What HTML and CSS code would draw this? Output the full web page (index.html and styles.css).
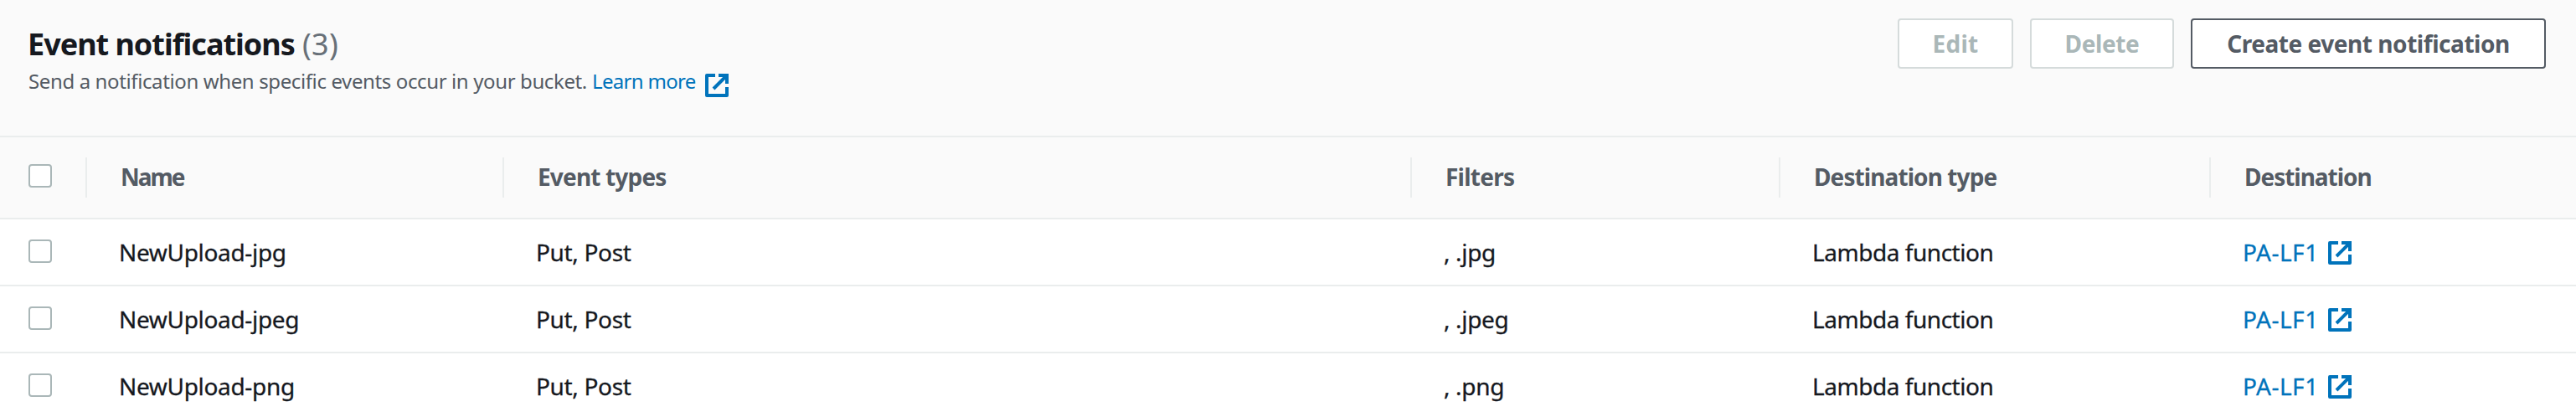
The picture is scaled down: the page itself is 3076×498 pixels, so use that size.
FILE: index.html
```html
<!DOCTYPE html>
<html lang="en">
<head>
<meta charset="utf-8">
<title>Event notifications</title>
<link rel="stylesheet" href="styles.css">
</head>
<body>
<svg class="sprite" aria-hidden="true">
  <symbol id="external" viewBox="0 0 16 16">
    <path d="M14 9v5H2V2h5" stroke-linejoin="round"/>
    <path d="M9 2h5v5M6 10l8-8"/>
  </symbol>
</svg>
<section class="panel">
  <header class="header">
    <div class="heading">
      <h2 class="title"><span class="title-text">Event notifications</span><span class="count">(3)</span></h2>
      <div class="description">
        <span class="description-text">Send a notification when specific events occur in your bucket.</span>
        <a class="link learn">Learn more</a>
        <svg class="icon learn-icon"><use href="#external"/></svg>
      </div>
    </div>
    <div class="actions">
      <button class="button edit" disabled>Edit</button>
      <button class="button delete" disabled>Delete</button>
      <button class="button create">Create event notification</button>
    </div>
  </header>
  <div class="row head">
    <div class="select"><span class="checkbox"></span></div>
    <div class="column name">Name</div>
    <div class="column events">Event types</div>
    <div class="column filters">Filters</div>
    <div class="column type">Destination type</div>
    <div class="column">Destination</div>
  </div>
  <div class="row">
    <div class="select"><span class="checkbox"></span></div>
    <div class="cell">NewUpload-jpg</div>
    <div class="cell">Put, Post</div>
    <div class="cell">, .jpg</div>
    <div class="cell lambda">Lambda function</div>
    <div class="cell"><a class="link destination">PA-LF1</a><svg class="icon row-icon"><use href="#external"/></svg></div>
  </div>
  <div class="row">
    <div class="select"><span class="checkbox"></span></div>
    <div class="cell">NewUpload-jpeg</div>
    <div class="cell">Put, Post</div>
    <div class="cell">, .jpeg</div>
    <div class="cell lambda">Lambda function</div>
    <div class="cell"><a class="link destination">PA-LF1</a><svg class="icon row-icon"><use href="#external"/></svg></div>
  </div>
  <div class="row">
    <div class="select"><span class="checkbox"></span></div>
    <div class="cell">NewUpload-png</div>
    <div class="cell">Put, Post</div>
    <div class="cell">, .png</div>
    <div class="cell lambda">Lambda function</div>
    <div class="cell"><a class="link destination">PA-LF1</a><svg class="icon row-icon"><use href="#external"/></svg></div>
  </div>
</section>
</body>
</html>
```
FILE: styles.css
```css
* { box-sizing: border-box; }
body {
  margin: 0;
  background: #fff;
  color: #16191f;
  font: 400 28px/36px "Noto Sans", "Open Sans", sans-serif;
  overflow: hidden;
}
.sprite { display: none; }
.panel { width: 100%; height: 498px; }
.header {
  display: flex;
  justify-content: space-between;
  height: 164px;
  padding: 22px 36px 0 33px;
  background: #fafafa;
  border-bottom: 2px solid #eaeded;
}
.heading { padding-top: 9px; }
.title {
  display: flex;
  margin: 0;
  font-size: 36px;
  font-weight: 700;
  line-height: 44px;
  white-space: nowrap;
}
.title-text { width: 328px; letter-spacing: -1.02px; }
.count { color: #687078; font-weight: 400; letter-spacing: 0.3px; }
.description {
  display: flex;
  margin-top: 4px;
  color: #545b64;
  font-size: 24px;
  line-height: 36px;
  white-space: nowrap;
}
.description-text { width: 674px; padding-left: 1px; letter-spacing: -0.38px; }
.link { color: #0073bb; }
.learn { width: 133px; letter-spacing: -0.69px; }
.icon {
  flex: none;
  width: 32px;
  height: 32px;
  fill: none;
  stroke: #0073bb;
  stroke-width: 2;
}
.learn-icon { margin-top: 7px; }
.actions { display: flex; gap: 20px; }
.button {
  height: 60px;
  padding: 0 0 1px;
  border: 2px solid #545b64;
  border-radius: 4px;
  background: #fff;
  color: #545b64;
  font: inherit;
  font-weight: 700;
  white-space: nowrap;
}
.button:disabled { border-color: #d5dbdb; color: #aab7b8; }
.edit { width: 138px; letter-spacing: 0.25px; }
.delete { width: 172px; letter-spacing: -0.38px; }
.create { width: 424px; letter-spacing: -0.45px; }
.row {
  display: grid;
  grid-template-columns: 102px 498px 1084px 440px 514px 1fr;
  align-items: center;
  height: 80px;
  border-bottom: 2px solid #eaeded;
}
.row:last-child { border-bottom: 0; padding-bottom: 2px; }
.head { height: 98px; background: #fafafa; color: #545b64; font-weight: 700; }
.select { padding-left: 34px; }
.checkbox {
  display: block;
  width: 28px;
  height: 28px;
  margin-bottom: 2px;
  border: 2px solid #aab7b8;
  border-radius: 4px;
  background: #fff;
}
.head .checkbox { margin-bottom: 4px; }
.column {
  height: 48px;
  padding-left: 40px;
  border-left: 2px solid #eaeded;
  line-height: 47px;
  letter-spacing: -1.03px;
}
.name { letter-spacing: -2px; }
.events { letter-spacing: -0.83px; }
.filters { letter-spacing: -0.75px; }
.type { letter-spacing: -0.91px; }
.cell {
  display: flex;
  align-items: center;
  padding-left: 40px;
  letter-spacing: -0.33px;
  -webkit-text-stroke: 0.3px currentColor;
}
.lambda { letter-spacing: -0.46px; }
.destination { width: 100px; letter-spacing: 0.5px; }
.row-icon { margin-top: 2px; }
```
